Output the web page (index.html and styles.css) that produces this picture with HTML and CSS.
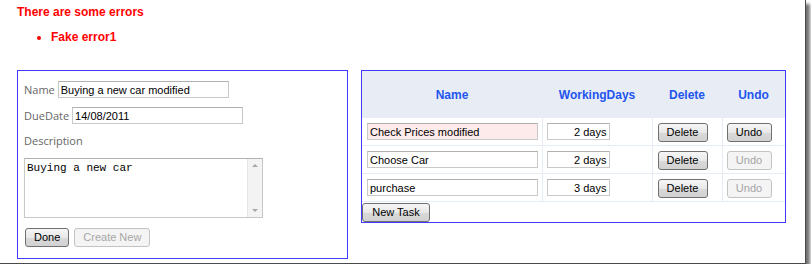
FILE: index.html
```html
<!DOCTYPE html>
<html lang="en">
<head>
    <meta charset="UTF-8">
    <title>Task Editor</title>
    <link rel="stylesheet" href="styles.css">
</head>
<body>
    <div class="frame">
        <div class="errors">
            <div class="errors-title">There are some errors</div>
            <ul class="errors-list">
                <li>Fake error1</li>
            </ul>
        </div>

        <div class="panels">
            <div class="panel edit-panel">
                <div class="field-row">
                    <label class="field-label">Name</label>
                    <input class="text-input name-input" type="text" value="Buying a new car modified">
                </div>
                <div class="field-row">
                    <label class="field-label">DueDate</label>
                    <input class="text-input date-input" type="text" value="14/08/2011">
                </div>
                <div class="field-label description-label">Description</div>
                <div class="textarea-box">
                    <textarea class="description-text">Buying a new car</textarea>
                    <div class="fake-scrollbar">
                        <span class="arrow arrow-up"></span>
                        <span class="arrow arrow-down"></span>
                    </div>
                </div>
                <div class="button-row">
                    <button class="btn">Done</button>
                    <button class="btn" disabled>Create New</button>
                </div>
            </div>

            <div class="panel tasks-panel">
                <table class="tasks-table">
                    <colgroup>
                        <col class="col-name">
                        <col class="col-days">
                        <col class="col-delete">
                        <col class="col-undo">
                    </colgroup>
                    <thead>
                        <tr>
                            <th>Name</th>
                            <th>WorkingDays</th>
                            <th>Delete</th>
                            <th>Undo</th>
                        </tr>
                    </thead>
                    <tbody>
                        <tr>
                            <td><input class="text-input task-name modified" type="text" value="Check Prices modified"></td>
                            <td><input class="text-input task-days" type="text" value="2 days"></td>
                            <td><button class="btn btn-delete">Delete</button></td>
                            <td><button class="btn btn-undo">Undo</button></td>
                        </tr>
                        <tr>
                            <td><input class="text-input task-name" type="text" value="Choose Car"></td>
                            <td><input class="text-input task-days" type="text" value="2 days"></td>
                            <td><button class="btn btn-delete">Delete</button></td>
                            <td><button class="btn btn-undo" disabled>Undo</button></td>
                        </tr>
                        <tr>
                            <td><input class="text-input task-name" type="text" value="purchase"></td>
                            <td><input class="text-input task-days" type="text" value="3 days"></td>
                            <td><button class="btn btn-delete">Delete</button></td>
                            <td><button class="btn btn-undo" disabled>Undo</button></td>
                        </tr>
                    </tbody>
                </table>
                <button class="btn btn-new">New Task</button>
            </div>
        </div>
    </div>
</body>
</html>
```

FILE: styles.css
```css
:root {
    --error-color: #ff0000;
    --panel-border: #3d3dff;
    --header-bg: #e8edf5;
    --header-text: #2255ee;
    --grid-line: #e6ecf5;
    --label-color: #666666;
    --input-border: #c8c8c8;
}

body {
    margin: 0;
    background: #ffffff;
    font-family: "Liberation Sans", Arial, sans-serif;
}

.frame {
    box-sizing: border-box;
    width: 806px;
    height: 264px;
    padding: 5px 0 0 17px;
    background: #ffffff;
    border-right: 1px solid #4a4a4a;
    border-bottom: 1px solid #4a4a4a;
    box-shadow: 4px 4px 3px rgba(0, 0, 0, 0.55);
}

.errors {
    color: var(--error-color);
    font-weight: bold;
    font-size: 12px;
    line-height: 15px;
}

.errors-list {
    margin: 10px 0 0 0;
    padding-left: 34px;
}

.panels {
    display: flex;
    align-items: flex-start;
    gap: 13px;
    margin-top: 25px;
}

.panel {
    box-sizing: border-box;
    border: 1px solid var(--panel-border);
}

/* left edit form */
.edit-panel {
    width: 331px;
    height: 189px;
    padding: 10px 6px 0 6px;
}

.field-row {
    display: flex;
    align-items: center;
    gap: 3px;
    height: 17px;
    margin-bottom: 9px;
}

.field-label {
    font-family: "Open Sans", sans-serif;
    font-size: 11px;
    color: var(--label-color);
}

.description-label {
    height: 17px;
    line-height: 17px;
    margin-top: -1px;
    margin-bottom: 9px;
}

.text-input {
    box-sizing: border-box;
    height: 17px;
    margin: 0;
    padding: 0 2px;
    border: 1px solid var(--input-border);
    border-top-color: #b0b0b0;
    font-family: "Liberation Sans", Arial, sans-serif;
    font-size: 11px;
    color: #000000;
    background: #ffffff;
    outline: none;
}

.name-input {
    width: 171px;
}

.date-input {
    width: 171px;
}

.textarea-box {
    box-sizing: border-box;
    display: flex;
    width: 239px;
    height: 60px;
    border: 1px solid var(--input-border);
    border-top-color: #b0b0b0;
}

.description-text {
    flex: 1;
    margin: 0;
    padding: 3px 2px;
    border: none;
    resize: none;
    outline: none;
    font-family: "Liberation Mono", "Courier New", monospace;
    font-size: 11px;
    line-height: 13px;
}

.fake-scrollbar {
    width: 14px;
    display: flex;
    flex-direction: column;
    justify-content: space-between;
    align-items: center;
    padding: 5px 0;
    background: #f3f3f3;
    border-left: 1px solid #e6e6e6;
}

.arrow {
    width: 0;
    height: 0;
    border-left: 3px solid transparent;
    border-right: 3px solid transparent;
}

.arrow-up {
    border-bottom: 3px solid #a8a8a8;
}

.arrow-down {
    border-top: 3px solid #a8a8a8;
}

.button-row {
    display: flex;
    gap: 5px;
    margin-top: 10px;
    padding-left: 1px;
}

.btn {
    box-sizing: border-box;
    height: 19px;
    margin: 0;
    padding: 0 8px;
    border: 1px solid #707070;
    border-radius: 3px;
    background: linear-gradient(to bottom, #f6f6f6 0%, #e8e8e8 50%, #d9d9d9 51%, #d2d2d2 100%);
    font-family: "Liberation Sans", Arial, sans-serif;
    font-size: 11px;
    color: #000000;
    line-height: 17px;
}

.btn:disabled {
    border-color: #c3c3c3;
    background: #f4f4f4;
    color: #a6a6a6;
}

/* right task grid */
.tasks-panel {
    width: 425px;
    height: 153px;
}

.tasks-table {
    width: 100%;
    table-layout: fixed;
    border-collapse: collapse;
}

.col-name { width: 180px; }
.col-days { width: 110px; }
.col-delete { width: 70px; }
.col-undo { width: 63px; }

.tasks-table th {
    height: 47px;
    padding: 0;
    background: var(--header-bg);
    color: var(--header-text);
    font-size: 12px;
    font-weight: bold;
    text-align: center;
}

.tasks-table td {
    height: 27px;
    padding: 0 0 0 4px;
    border: 1px solid var(--grid-line);
    border-top: none;
}

.tasks-table tr td:first-child {
    border-left: none;
    padding-left: 5px;
}

.tasks-table tr td:last-child {
    border-right: none;
}

.task-name {
    width: 171px;
    display: block;
}

.task-name.modified {
    background: #fdeaea;
}

.task-days {
    width: 63px;
    display: block;
    text-align: right;
}

.btn-delete {
    width: 50px;
    padding: 0;
    margin-left: 1px;
}

.btn-undo {
    width: 45px;
    padding: 0;
}

.btn-new {
    width: 68px;
    padding: 0;
    margin: 1px 0 0 0;
}
```
